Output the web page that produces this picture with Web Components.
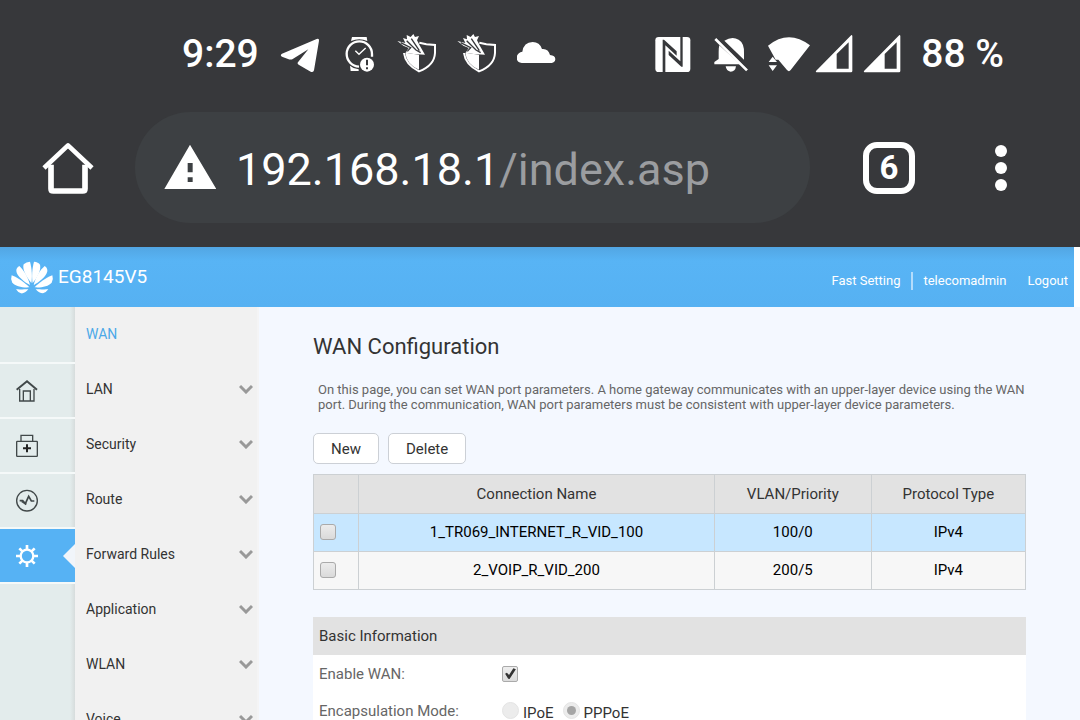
<!DOCTYPE html>
<html lang="en">
<head>
<meta charset="utf-8">
<meta name="viewport" content="width=device-width, initial-scale=1">
<title>EG8145V5</title>
<style>
  body { margin: 0; font-family: Roboto, "Liberation Sans", sans-serif; background: #f4f8ff; }
</style>
</head>
<body>
<router-app></router-app>
<script>
const define = (name, html) => {
  const template = document.createElement('template');
  template.innerHTML = `<style>*{box-sizing:border-box}svg{display:block;flex:none}</style>` + html;
  customElements.define(name, class extends HTMLElement {
    constructor() {
      super();
      this.attachShadow({ mode: 'open' }).append(template.content.cloneNode(true));
    }
  });
};

const shield = `<svg width="40" height="42" viewBox="681 39 120 126" aria-hidden="true">
  <path d="M748 68L769 73L795 75V99Q793 137 747 154Q706 134 702 99" fill="none" stroke="#fff" stroke-width="6"/>
  <path d="M706 98L747 104V149Q709 132 706 98Z" fill="#fff"/>
  <path d="M682 63L706 69L699 54L711 58L710 45L722 51L730 42L735 51L747 48L741 61L750 78L765 104L731 102L707 98L716 84L700 77Z" fill="#fff"/>
  <path d="M692 68L722 83L712 94M710 62L738 90L752 98M724 56L748 92" fill="none" stroke="#37383b" stroke-width="4"/>
</svg>`;
const signal = `<svg width="44" height="42" viewBox="525 39 132 126" aria-hidden="true">
  <path fill="#fff" fill-rule="evenodd" d="M528 153Q526 157 530 157H633Q637 157 637 153V48Q636 43 632 47ZM590 102L626 67V146H590Z"/></svg>`;

define('status-bar', `
<style>
  :host { display: flex; justify-content: space-between; align-items: center; height: 108px; padding: 0 76px 0 182px;
          color: #fff; font-size: 39px; font-weight: 500; line-height: 46px; white-space: nowrap; }
  .group { display: flex; align-items: center; gap: 20px; }
  .system { gap: 14px; }
  .radios { display: flex; gap: 4px; }
</style>
<div class="group">
  <span>9:29</span>
  <svg width="42" height="42" viewBox="327 39 126 126" aria-hidden="true"><path fill="#fff" d="M336 101L440 57Q448 54 447 62L432 151Q430 159 422 155L386 134Q380 130 385 125L415 88L367 118Q361 120 354 117L336 110Q329 106 336 101Z"/></svg>
  <svg width="36" height="42" viewBox="513 39 108 126" aria-hidden="true">
    <path fill="#fff" d="M546 51H590L592 63Q568 52 543 63ZM540 137Q551 147 566 148V153H542Z"/>
    <path d="M606 110V102A38 38 0 1 0 567 140" fill="none" stroke="#fff" stroke-width="7"/>
    <path d="M556 92L567 103L587 84" fill="none" stroke="#fff" stroke-width="4"/>
    <circle cx="591" cy="134" r="21" fill="#fff"/><path d="M591 119V136M591 142V148" stroke="#37383b" stroke-width="6"/>
  </svg>
  ${shield}${shield}
  <svg width="40" height="42" viewBox="1041 39 120 126" aria-hidden="true"><path fill="#fff" d="M1055 129Q1040 127 1040 113Q1041 98 1057 95Q1061 67 1088 66Q1109 66 1116 87Q1135 85 1140 105Q1156 106 1156 118Q1155 128 1145 129Z"/></svg>
</div>
<div class="group system">
  <div class="radios">
    <svg width="52" height="42" viewBox="39 39 156 126" aria-hidden="true"><rect x="46" y="51" width="105" height="105" rx="10" fill="#fff"/>
      <g fill="#37383b"><path d="M68 59H72L110 94V107L76 76V157H68Z"/><path d="M121 50H128V140H124L86 105V92L121 124Z"/></g></svg>
    <svg width="48" height="42" viewBox="207 39 144 126" aria-hidden="true"><path fill="#fff" d="M253 62Q276 48 296 59Q313 69 312 99V119ZM238 76L300 133H223V126L236 117V95Q236 83 238 76ZM257 139H288Q286 155 272 155Q259 154 257 139Z"/>
      <path d="M226 57L321 151" stroke="#fff" stroke-width="8"/><path d="M236 55L324 143" stroke="#37383b" stroke-width="5"/></svg>
    <svg width="50" height="42" viewBox="363 39 150 126" aria-hidden="true"><path fill="#fff" d="M384 77Q446 27 510 76L452 150Q447 157 441 150L415 119H407ZM386 126L398 110L411 126ZM386 136H411L398 153Z"/></svg>
    ${signal}${signal}
  </div>
  <span>88 %</span>
</div>`);

define('browser-toolbar', `
<style>
  :host { display: grid; grid-template-columns: 52px minmax(0, 1fr) 52px 90px; column-gap: 41px; align-items: center;
          padding: 4px 34px 24px 42px; }
  button { border: 0; padding: 0; background: none; color: #fff; font: inherit; display: flex; justify-content: center; align-items: center; height: 52px; }
  .address { display: flex; align-items: center; gap: 20px; height: 111px; margin-right: 12px; padding: 4px 30px 0 29px; border-radius: 56px; background: #3d4043; }
  .address svg { margin-bottom: 6px; }
  .url { color: #fff; font-size: 45px; line-height: 54px; white-space: nowrap; }
  .url span { color: #9b9da0; }
  .tabs { border: 6px solid #fff; border-radius: 14px; font: bold 33px/40px Roboto, sans-serif; }
</style>
<button aria-label="Home"><svg width="52" height="52" viewBox="66 110 156 156" aria-hidden="true"><path d="M72 188L144 120L216 188" fill="none" stroke="#fff" stroke-width="14" stroke-linejoin="round"/><path d="M93 178V250Q93 257 100 257H188Q195 257 195 250V178" fill="none" stroke="#fff" stroke-width="17"/></svg></button>
<div class="address">
  <svg width="52" height="46" viewBox="433 111 156 138" aria-hidden="true"><path fill="#fff" fill-rule="evenodd" d="M511 113L590 246H434ZM504 168V196H519V168ZM504 211V225H519V211Z"/></svg>
  <div class="url">192.168.18.1<span>/index.asp</span></div>
</div>
<button class="tabs" aria-label="Open tabs">6</button>
<button aria-label="Menu"><svg width="14" height="48" viewBox="0 0 14 48" aria-hidden="true"><g fill="#fff"><circle cx="7" cy="7" r="6"/><circle cx="7" cy="24" r="6"/><circle cx="7" cy="41" r="6"/></g></svg></button>`);

define('router-header', `
<style>
  :host { display: flex; justify-content: space-between; align-items: center; height: 60px; margin-right: 6px; padding: 0 6px 0 10px;
          background: linear-gradient(#52a6e3, #58b4f5 14px, #56b1f2); color: #fff; }
  .brand { display: flex; align-items: center; gap: 4px; font-size: 19px; line-height: 24px; }
  .brand svg { margin-top: 2px; }
  nav { display: flex; align-items: center; padding-top: 8px; font-size: 13px; line-height: 18px; }
  a { color: inherit; text-decoration: none; }
  .user { margin: 0 21px 0 11px; padding-left: 10px; border-left: 2px solid #b3dcfb; }
</style>
<div class="brand">
  <svg width="44" height="36" viewBox="31 61 132 108" aria-hidden="true"><g fill="#fff">
    <path d="M95 130C79 110 67 89 72 74Q80 66 91 66C97 87 98 113 95 130Z"/>
    <path d="M91 136C75 128 51 109 50 94Q49 85 59 79C73 92 86 114 91 136Z"/>
    <path d="M89 143C70 145 46 139 38 129Q32 118 36 107C55 114 77 130 89 143Z"/>
    <path d="M86 149C79 158 71 162 64 161Q55 159 49 149C58 150 76 149 86 149Z"/>
    <path d="M99 130C96 113 97 87 103 66Q116 67 121 75C125 91 114 112 99 130Z"/>
    <path d="M102 136C107 114 121 91 135 79Q144 85 143 95C140 111 118 128 102 136Z"/>
    <path d="M105 143C117 130 139 114 158 107Q162 119 156 129C147 140 123 145 105 143Z"/>
    <path d="M108 149C118 149 135 150 146 149Q139 159 130 161C122 161 115 157 108 149Z"/></g></svg>
  <span>EG8145V5</span>
</div>
<nav><a href="#">Fast Setting</a><a class="user" href="#">telecomadmin</a><a href="#">Logout</a></nav>`);

define('icon-rail', `
<style>
  :host { display: block; background: linear-gradient(90deg, transparent 70px, #d6dcdc), #e3ecec; }
  a, div { display: flex; align-items: center; height: 55px; padding-left: 14px; border-bottom: 2px solid #f5f9f9; }
  .spacer { height: 57px; }
  .active { position: relative; background: #56b2f4; }
  .active::after { content: ""; position: absolute; right: 0; top: 15px; width: 12px; height: 24px; background: #f1f5fa; clip-path: polygon(0 50%, 100% 0, 100% 100%); }
</style>
<div class="spacer"></div>
<a href="#" aria-label="Home"><svg width="26" height="26" viewBox="42 414 78 78" aria-hidden="true"><g fill="none" stroke="#414849" stroke-width="4"><path d="M50 449L81 424L111 449" stroke-width="6"/><path d="M59 447V483H102V447M70 483V453H91V483"/></g></svg></a>
<a href="#" aria-label="Maintenance"><svg width="26" height="26" viewBox="42 39 78 78" aria-hidden="true"><g fill="none" stroke="#414849" stroke-width="4"><rect x="50" y="64" width="62" height="45" rx="2"/><path d="M63 64V46H98V64"/><path d="M81 73V97M69 85H93" stroke-width="6" stroke="#222"/></g></svg></a>
<a href="#" aria-label="Diagnosis"><svg width="26" height="26" viewBox="42 204 78 78" aria-hidden="true"><g fill="none" stroke="#414849" stroke-width="4"><circle cx="81" cy="242" r="31"/><path d="M59 242H68L76 251L86 229L94 243H103" stroke-width="5"/><path d="M65 244L79 253" stroke-width="5"/></g></svg></a>
<a class="active" href="#" aria-label="Advanced"><svg width="26" height="26" viewBox="42 369 78 78" aria-hidden="true"><g fill="none" stroke="#fff"><circle cx="81" cy="408" r="19" stroke-width="7"/><path d="M81 375V389M81 427V441M48 408H62M100 408H114M58 385L68 395M94 421L104 431M58 431L68 421M94 395L104 385" stroke-width="8"/></g></svg></a>`);

define('menu-item', `
<style>
  :host { display: block; }
  a { display: flex; align-items: center; justify-content: space-between; height: 55px; padding: 0 4px 2px 11px; color: #333; font-size: 14px; line-height: 20px; text-decoration: none; }
  :host([current]) a { color: #4ca9e8; }
  :host([current]) svg { display: none; }
</style>
<a href="#"><slot></slot><svg width="14" height="10" viewBox="0 0 14 10" aria-hidden="true"><path d="M1 2L7 8L13 2" fill="none" stroke="#999" stroke-width="3"/></svg></a>`);

define('side-menu', `
<style>:host { display: block; background: #f1f1f1; border-right: 2px solid #f4f4f5; }</style>
<slot></slot>`);

define('connection-table', `
<style>
  :host { display: block; }
  table { width: 100%; table-layout: fixed; border-collapse: collapse; font-size: 15px; line-height: 20px; text-align: center; color: #000; background: #f7f7f7; }
  th, td { height: 39px; padding: 0; border: 1px solid #ccd0d3; font-weight: 400; }
  td { height: 38px; padding-bottom: 1px; }
  th { background: #e2e2e2; color: #333; }
  .pick { width: 45px; } .name { width: 357px; } .vlan { width: 155px; }
  .selected { background: #c7e7ff; }
  td:first-child { text-align: left; padding-left: 6px; }
  input { appearance: none; display: block; width: 16px; height: 16px; margin: 0; border: 1px solid #aaa; border-radius: 3px; background: linear-gradient(#ececec, #dadada); }
</style>
<table>
  <colgroup><col class="pick"><col style="width:50%"><col style="width:22%"><col></colgroup>
  <thead><tr><th></th><th>Connection Name</th><th>VLAN/Priority</th><th>Protocol Type</th></tr></thead>
  <tbody>
    <tr class="selected"><td><input type="checkbox" aria-label="1_TR069_INTERNET_R_VID_100"></td><td>1_TR069_INTERNET_R_VID_100</td><td>100/0</td><td>IPv4</td></tr>
    <tr><td><input type="checkbox" aria-label="2_VOIP_R_VID_200"></td><td>2_VOIP_R_VID_200</td><td>200/5</td><td>IPv4</td></tr>
  </tbody>
</table>`);

define('basic-info', `
<style>
  :host { display: block; background: #fff; color: #666; font-size: 15px; line-height: 20px; }
  h2 { margin: 0; padding: 9px 6px; background: #e2e2e2; color: #333; font-size: inherit; font-weight: 400; }
  .row { display: grid; grid-template-columns: 183px 1fr; align-items: center; height: 37px; padding: 0 6px; }
  .options { display: flex; align-items: center; color: #333; }
  .options label { margin: 4px 9px 0 4px; }
  input { appearance: none; margin: 0; width: 16px; height: 16px; }
  .options input { width: 17px; height: 17px; }
  input[type=checkbox] { border: 1px solid #aaa; border-radius: 2px; background: linear-gradient(#eee, #dcdcdc); }
  input:checked::before { content: ""; display: block; }
  input[type=checkbox]:checked::before { width: 14px; height: 14px; background: #333; clip-path: polygon(15% 52%, 28% 44%, 43% 60%, 74% 12%, 92% 20%, 47% 90%, 37% 88%); }
  input[type=radio] { border-radius: 50%; background: #ececec; border: 1px solid #e4e4e4; }
  input[type=radio]:checked::before { width: 9px; height: 9px; margin: 3px; border-radius: 50%; background: #a5a5a5; }
</style>
<h2>Basic Information</h2>
<div class="row"><label for="enable">Enable WAN:</label><input id="enable" type="checkbox" checked></div>
<div class="row"><span id="mode">Encapsulation Mode:</span><div class="options" role="radiogroup" aria-labelledby="mode">
  <input id="ipoe" name="mode" type="radio" disabled><label for="ipoe">IPoE</label>
  <input id="pppoe" name="mode" type="radio" checked disabled><label for="pppoe">PPPoE</label></div></div>`);

define('wan-page', `
<style>
  :host { display: block; padding: 26px 54px 0; }
  h1 { margin: 0; font-size: 22px; line-height: 28px; font-weight: 400; color: #333; }
  p { margin: 21px 0; padding: 0 0 0 5px; font-size: 13px; line-height: 15px; color: #666; }
  .actions { display: flex; gap: 9px; margin-bottom: 10px; }
  button { height: 31px; padding: 0 17px; border: 1px solid #ccd0d6; border-radius: 5px; background: #fff; color: #333; font: 15px/20px Roboto, sans-serif; }
  basic-info { margin-top: 27px; }
</style>
<h1>WAN Configuration</h1>
<p>On this page, you can set WAN port parameters. A home gateway communicates with an upper-layer device using the WAN port. During the communication, WAN port parameters must be consistent with upper-layer device parameters.</p>
<div class="actions"><button>New</button><button>Delete</button></div>
<connection-table></connection-table>
<basic-info></basic-info>`);

define('router-app', `
<style>
  :host { display: flex; flex-direction: column; height: 100vh; overflow: hidden; background: #f4f8ff; }
  .chrome { flex: none; background: #37383b; }
  router-header { flex: none; box-shadow: 6px 0 #fff; }
  main { flex: 1; min-height: 0; display: grid; grid-template-columns: 75px 184px minmax(0, 1fr); }
  main > * { min-height: 0; }
</style>
<div class="chrome"><status-bar></status-bar><browser-toolbar></browser-toolbar></div>
<router-header></router-header>
<main>
  <icon-rail></icon-rail>
  <side-menu>
    <menu-item current>WAN</menu-item><menu-item>LAN</menu-item><menu-item>Security</menu-item><menu-item>Route</menu-item>
    <menu-item>Forward Rules</menu-item><menu-item>Application</menu-item><menu-item>WLAN</menu-item><menu-item>Voice</menu-item>
  </side-menu>
  <wan-page></wan-page>
</main>`);
</script>
</body>
</html>
